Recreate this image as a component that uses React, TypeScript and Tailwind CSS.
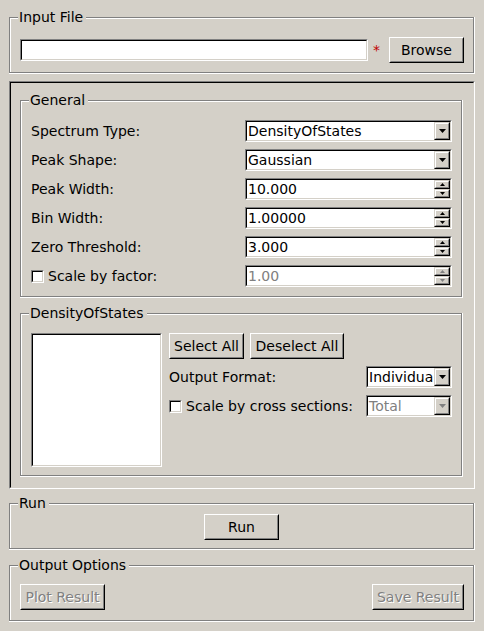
import type { ReactNode } from "react";

function GroupBox({
  title,
  className = "",
  innerClassName = "",
  children,
}: {
  title: string;
  className?: string;
  innerClassName?: string;
  children: ReactNode;
}) {
  return (
    <div className={`border-r border-b border-white ${className}`}>
      <div
        className={`relative border border-[#808080] shadow-[inset_1px_1px_0_#fff] ${innerClassName}`}
      >
        <span className="absolute left-[8px] top-[-9px] bg-[#d4d0c8] pl-[1px] pr-[3px] leading-[16px]">
          {title}
        </span>
        {children}
      </div>
    </div>
  );
}

function Sunken({ className = "", children }: { className?: string; children?: ReactNode }) {
  return (
    <div
      className={`border border-t-[#808080] border-l-[#808080] border-b-white border-r-white ${className}`}
    >
      <div className="h-full border border-t-black border-l-black border-b-[#d4d0c8] border-r-[#d4d0c8] bg-white">
        {children}
      </div>
    </div>
  );
}

function Button({
  children,
  className = "",
  disabled,
}: {
  children: ReactNode;
  className?: string;
  disabled?: boolean;
}) {
  return (
    <div
      className={`h-[26px] border border-t-white border-l-white border-b-black border-r-black ${className}`}
    >
      <div
        className={`flex h-full items-center justify-center border border-t-[#d4d0c8] border-l-[#d4d0c8] border-b-[#808080] border-r-[#808080] whitespace-nowrap ${
          disabled ? "text-[#808080] [text-shadow:1px_1px_0_#fff]" : ""
        }`}
      >
        {children}
      </div>
    </div>
  );
}

function Bevel({ className = "", children }: { className?: string; children: ReactNode }) {
  return (
    <div
      className={`border border-t-[#d4d0c8] border-l-[#d4d0c8] border-b-black border-r-black bg-[#d4d0c8] ${className}`}
    >
      <div className="flex h-full items-center justify-center border border-t-white border-l-white border-b-[#808080] border-r-[#808080]">
        {children}
      </div>
    </div>
  );
}

function Combo({
  value,
  disabled,
  className = "",
}: {
  value: string;
  disabled?: boolean;
  className?: string;
}) {
  const color = disabled ? "#808080" : "#000";
  return (
    <Sunken className={`h-[22px] ${className}`}>
      <div className="flex h-full items-center">
        <span
          className={`min-w-0 flex-1 whitespace-nowrap pl-[1px] leading-[18px] ${
            disabled ? "text-[#808080]" : ""
          }`}
        >
          {value}
        </span>
        <Bevel className="h-full w-[16px] shrink-0">
          <svg width="7" height="4" viewBox="0 0 7 4">
            <polygon points="0,0 7,0 3.5,4" fill={color} />
          </svg>
        </Bevel>
      </div>
    </Sunken>
  );
}

function Spin({ value, disabled }: { value: string; disabled?: boolean }) {
  const color = disabled ? "#808080" : "#000";
  return (
    <Sunken className="h-[22px]">
      <div className="flex h-full items-center">
        <span
          className={`flex-1 pl-[1px] leading-[18px] ${disabled ? "text-[#808080]" : ""}`}
        >
          {value}
        </span>
        <div className="flex h-full w-[16px] shrink-0 flex-col">
          <Bevel className="h-[9px]">
            <svg width="5" height="3" viewBox="0 0 5 3">
              <polygon points="0,3 5,3 2.5,0" fill={color} />
            </svg>
          </Bevel>
          <Bevel className="h-[9px]">
            <svg width="5" height="3" viewBox="0 0 5 3">
              <polygon points="0,0 5,0 2.5,3" fill={color} />
            </svg>
          </Bevel>
        </div>
      </div>
    </Sunken>
  );
}

function CheckBox() {
  return <Sunken className="h-[13px] w-[13px] shrink-0" />;
}

export default function App() {
  return (
    <div className="flex h-[631px] w-[484px] flex-col bg-[#d4d0c8] pl-[9px] pr-[9px] pt-[17px] font-['DejaVu_Sans',sans-serif] text-[14px] leading-[16px] text-black">
      <GroupBox title="Input File" innerClassName="pl-[10px] pr-[9px] pt-[19px] pb-[9px]">
        <div className="flex items-center">
          <Sunken className="h-[22px] flex-1" />
          <span className="ml-[5px] mr-[9px] text-[#c00000]">*</span>
          <Button className="w-[75px]">Browse</Button>
        </div>
      </GroupBox>

      <div className="mt-[7px] h-[408px] border border-t-[#808080] border-l-[#808080] border-b-white border-r-white">
        <div className="h-full border border-t-black border-l-black border-b-[#d4d0c8] border-r-[#d4d0c8] pl-[9px] pr-[10px] pt-[17px]">
          <GroupBox title="General" innerClassName="pl-[10px] pr-[9px] pt-[19px] pb-[9px]">
            <div className="grid grid-cols-[1fr_207px] gap-y-[7px]">
              <span className="self-center">Spectrum Type:</span>
              <Combo value="DensityOfStates" />
              <span className="self-center">Peak Shape:</span>
              <Combo value="Gaussian" />
              <span className="self-center">Peak Width:</span>
              <Spin value="10.000" />
              <span className="self-center">Bin Width:</span>
              <Spin value="1.00000" />
              <span className="self-center">Zero Threshold:</span>
              <Spin value="3.000" />
              <div className="flex items-center gap-[4px] self-center">
                <CheckBox />
                <span>Scale by factor:</span>
              </div>
              <Spin value="1.00" disabled />
            </div>
          </GroupBox>

          <GroupBox
            title="DensityOfStates"
            className="mt-[15px]"
            innerClassName="pl-[10px] pr-[9px] pt-[19px] pb-[8px]"
          >
            <div className="flex gap-[7px]">
              <Sunken className="h-[134px] w-[131px] shrink-0" />
              <div className="flex flex-1 flex-col gap-[7px]">
                <div className="flex gap-[6px]">
                  <Button className="w-[75px]">Select All</Button>
                  <Button className="w-[94px]">Deselect All</Button>
                </div>
                <div className="flex items-center justify-between">
                  <span>Output Format:</span>
                  <Combo value="Individua" className="w-[86px]" />
                </div>
                <div className="flex items-center justify-between">
                  <div className="flex items-center gap-[4px]">
                    <CheckBox />
                    <span>Scale by cross sections:</span>
                  </div>
                  <Combo value="Total" disabled className="w-[86px]" />
                </div>
              </div>
            </div>
          </GroupBox>
        </div>
      </div>

      <GroupBox
        title="Run"
        className="mt-[14px]"
        innerClassName="flex justify-center pt-[10px] pb-[8px]"
      >
        <Button className="w-[75px]">Run</Button>
      </GroupBox>

      <GroupBox
        title="Output Options"
        className="mt-[15px]"
        innerClassName="flex justify-between pl-[10px] pr-[9px] pt-[18px] pb-[10px]"
      >
        <Button className="w-[85px]" disabled>
          Plot Result
        </Button>
        <Button className="w-[92px]" disabled>
          Save Result
        </Button>
      </GroupBox>
    </div>
  );
}
